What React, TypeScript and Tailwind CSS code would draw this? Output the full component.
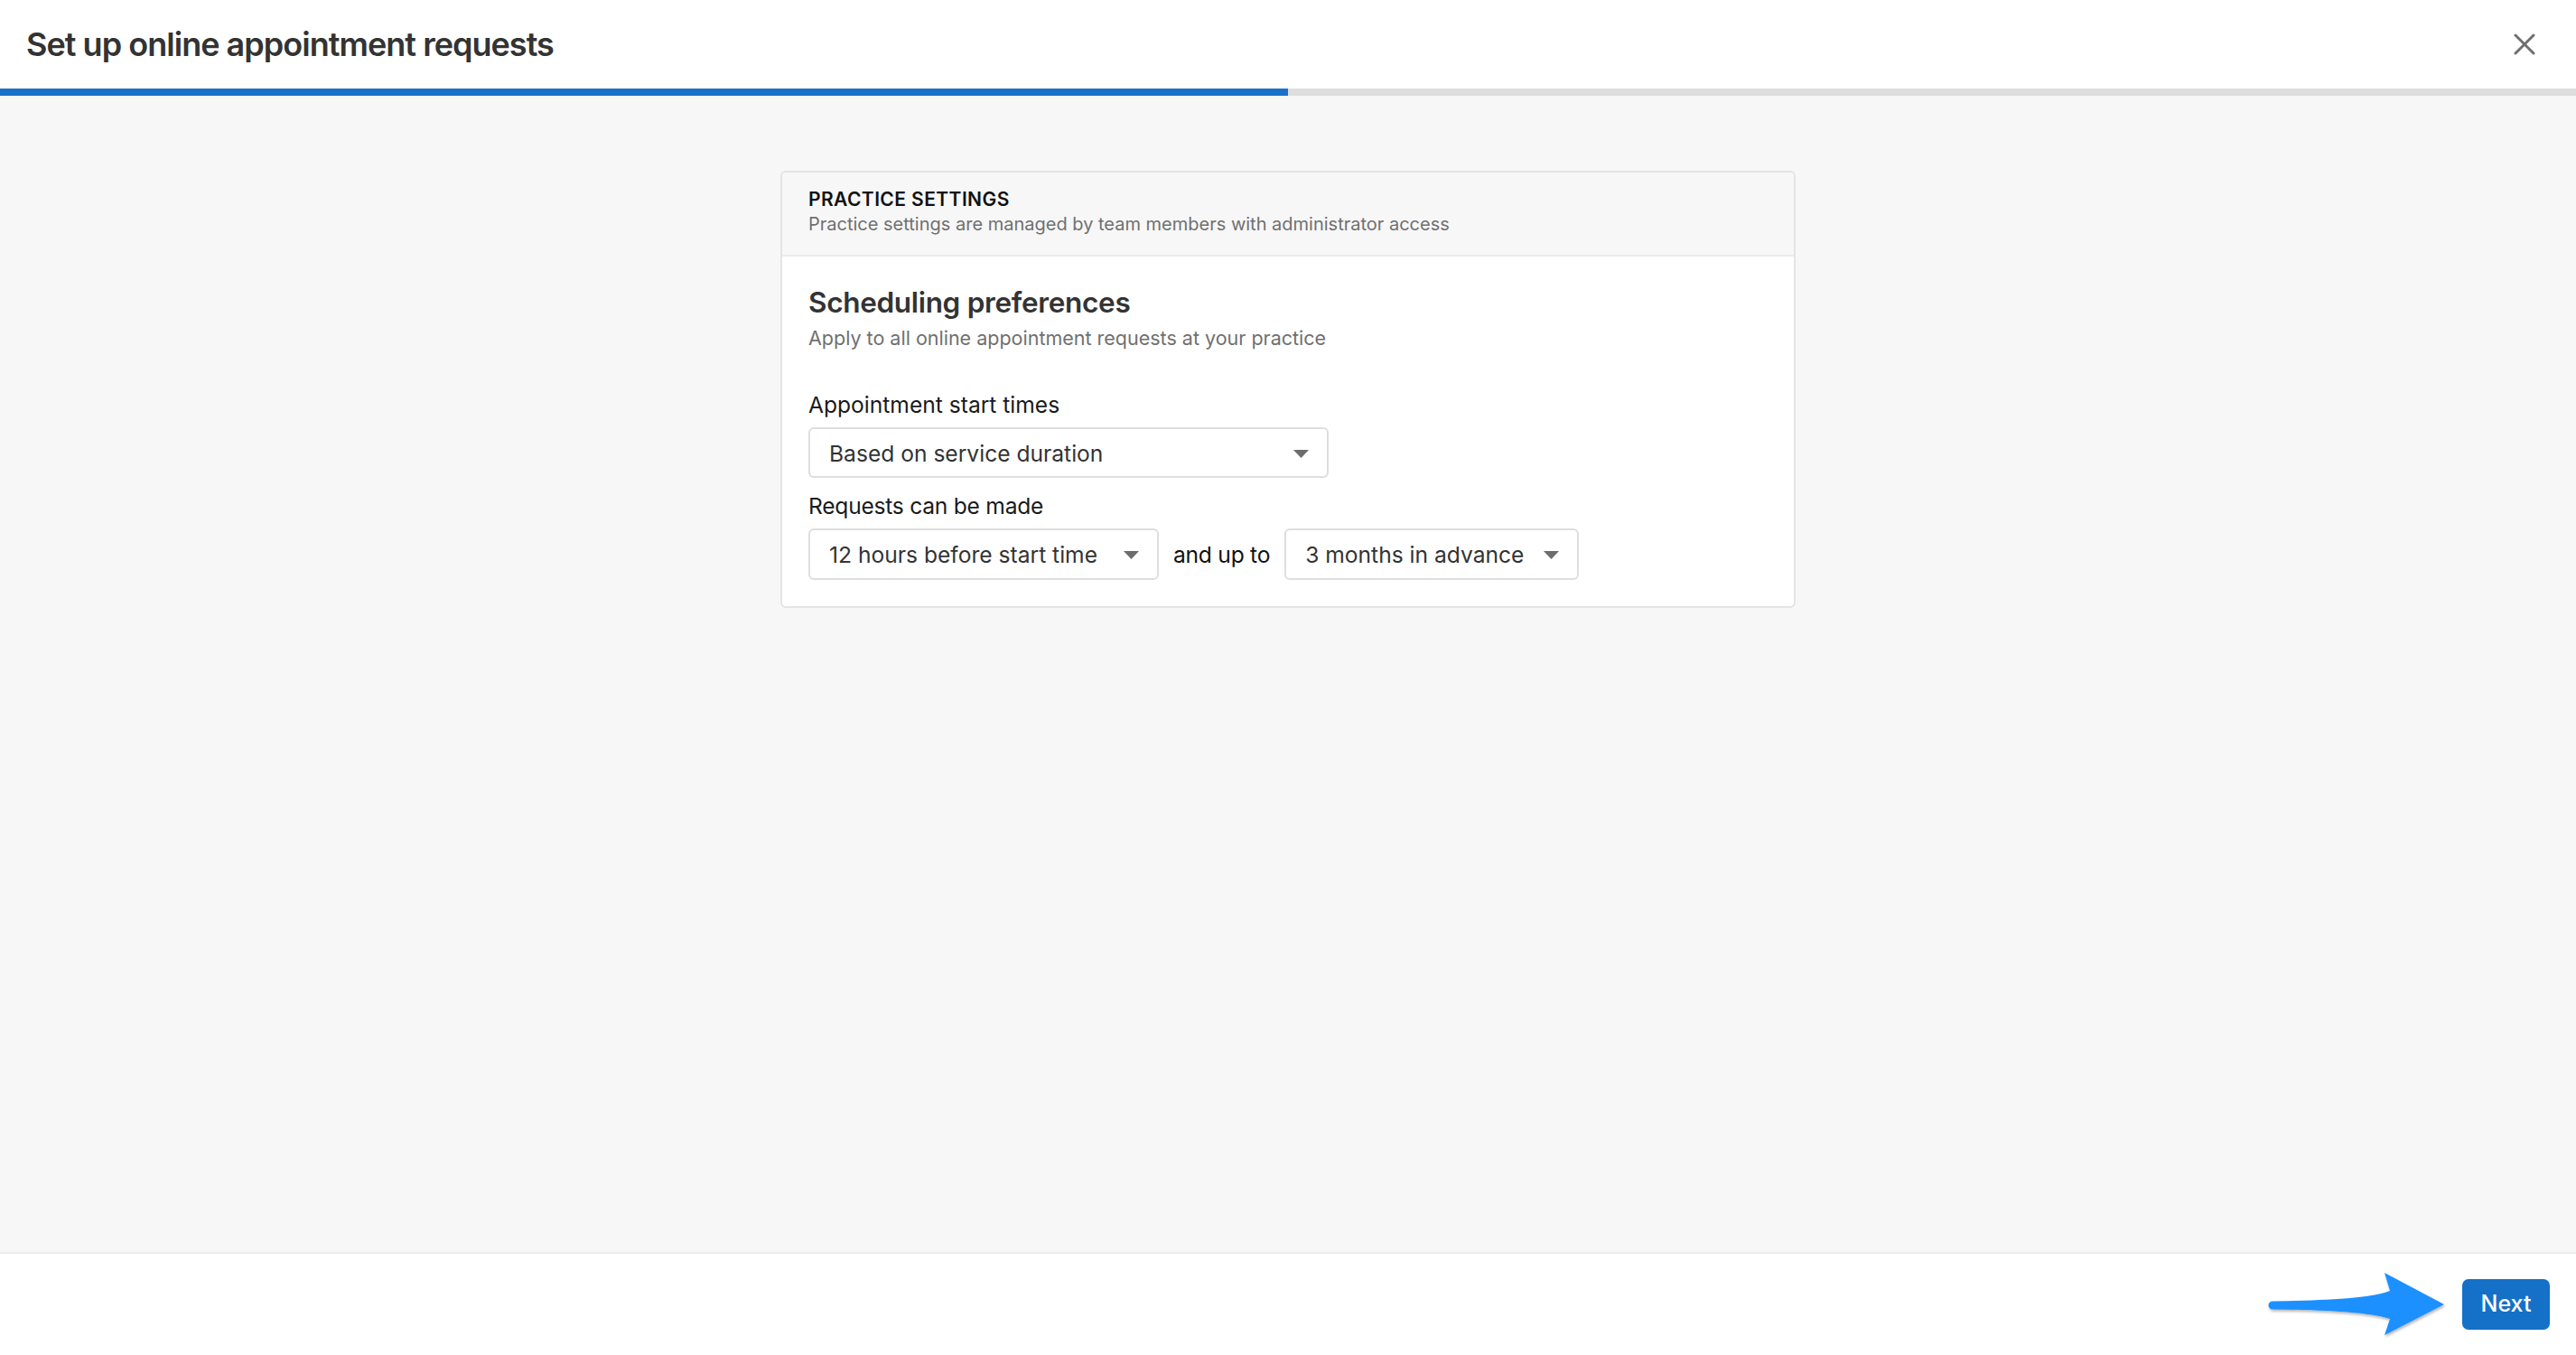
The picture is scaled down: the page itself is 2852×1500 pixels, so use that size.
import React from "react";

function Caret() {
  return (
    <svg width="17" height="9" viewBox="0 0 17 9" className="shrink-0">
      <path d="M0 0 H17 L8.5 9 Z" fill="#6d6d6d" />
    </svg>
  );
}

function Select({ label, width, height }: { label: string; width: string; height: string }) {
  return (
    <div
      className={`${width} ${height} flex items-center justify-between rounded-[6px] border-2 border-[#dedede] bg-white pl-[21px] pr-[20px] pt-[2px] text-[24.6px] text-[#333333]`}
    >
      <span>{label}</span>
      <Caret />
    </div>
  );
}

function Arrow() {
  return (
    <svg width="200" height="84" viewBox="0 0 200 84" className="shrink-0 overflow-visible">
      <defs>
        <filter id="sh" x="-10%" y="-20%" width="130%" height="150%">
          <feDropShadow dx="1" dy="2" stdDeviation="1.5" floodColor="#000000" floodOpacity="0.3" />
        </filter>
      </defs>
      <path
        d="M6 38.5 C 60 37.5, 112 36, 136 27 L 130 7 L 196 42 L 130 76 L 136 58 C 112 50, 60 48, 6 47.5 A 4.5 4.5 0 0 1 6 38.5 Z"
        fill="#1e90ff"
        filter="url(#sh)"
      />
    </svg>
  );
}

export default function App() {
  return (
    <div className="h-[1500px] w-full flex flex-col font-['Inter',sans-serif] bg-white">
      {/* Header */}
      <div className="h-[98px] shrink-0 flex items-center justify-between pl-[29px] pr-[45px] bg-white">
        <h1 className="text-[36px] font-semibold text-[#333333] tracking-[-0.027em]">
          Set up online appointment requests
        </h1>
        <svg width="24" height="24" viewBox="0 0 24 24">
          <path d="M2 2 L22 22 M22 2 L2 22" stroke="#6e6e6e" strokeWidth="3" strokeLinecap="round" />
        </svg>
      </div>
      {/* Progress */}
      <div className="h-[8px] shrink-0 flex bg-[#dddddd]">
        <div className="w-1/2 bg-[#1a71c9]" />
      </div>
      {/* Body */}
      <div className="flex-1 bg-[#f7f7f7] flex flex-col items-center pt-[83px]">
        <div className="w-[1124px] rounded-[6px] border-2 border-[#e4e4e4] bg-white overflow-hidden">
          <div className="bg-[#f7f7f7] border-b-2 border-[#ebebeb] pl-[29px] pt-[17px] pb-[22px]">
            <div className="text-[21px] leading-[26px] font-semibold text-[#111111] tracking-[0.02em]">
              PRACTICE SETTINGS
            </div>
            <div className="mt-[2px] text-[20px] leading-[24px] text-[#707070]">
              Practice settings are managed by team members with administrator access
            </div>
          </div>
          <div className="pl-[29px] pt-[33px] pb-[29px]">
            <div className="text-[31.5px] leading-[36px] font-semibold text-[#333333] tracking-[-0.01em]">
              Scheduling preferences
            </div>
            <div className="mt-[9px] text-[21.5px] leading-[24px] text-[#707070]">
              Apply to all online appointment requests at your practice
            </div>
            <div className="mt-[47px] text-[24.6px] leading-[30px] text-[#1a1a1a]">Appointment start times</div>
            <div className="mt-[10px]">
              <Select label="Based on service duration" width="w-[576px]" height="h-[56px]" />
            </div>
            <div className="mt-[16px] text-[24.6px] leading-[30px] text-[#1a1a1a] tracking-[-0.01em]">
              Requests can be made
            </div>
            <div className="mt-[10px] flex items-center gap-[16px]">
              <Select label="12 hours before start time" width="w-[388px]" height="h-[57px]" />
              <span className="pt-[2px] text-[24.6px] text-[#111111] tracking-[-0.01em]">and up to</span>
              <Select label="3 months in advance" width="w-[326px]" height="h-[57px]" />
            </div>
          </div>
        </div>
      </div>
      {/* Footer */}
      <div className="h-[114px] shrink-0 border-t-2 border-[#eeeeee] bg-white flex items-center justify-end pr-[29px] gap-[16px]">
        <Arrow />
        <button className="h-[56px] w-[97px] rounded-[7px] bg-[#1570c7] text-white text-[25px] font-medium">
          Next
        </button>
      </div>
    </div>
  );
}
